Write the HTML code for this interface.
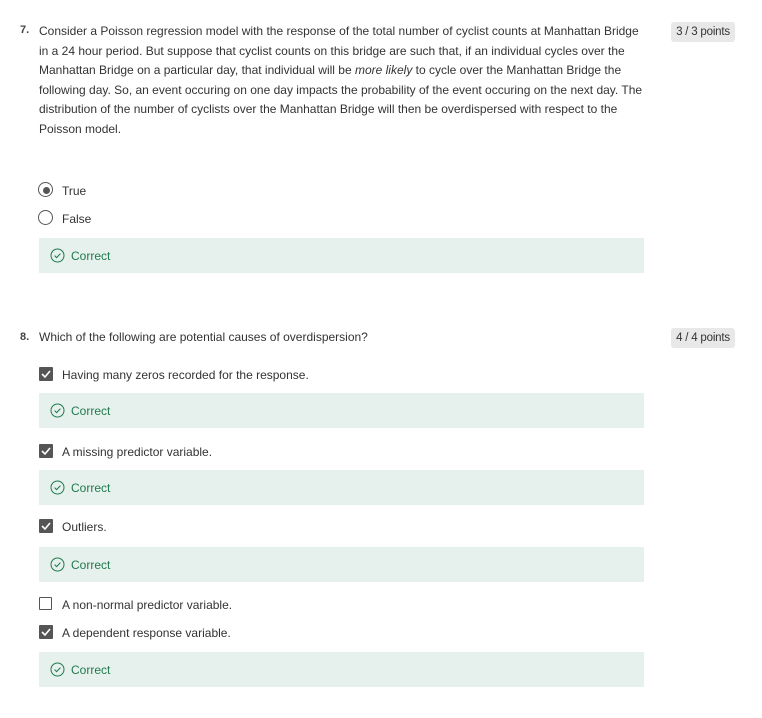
<!DOCTYPE html>
<html><head><style>
body{margin:0;background:#fff;font-family:"Liberation Sans",sans-serif;color:#333;font-size:12px;}
.a{position:absolute;white-space:nowrap;}
.num{font-weight:bold;font-size:11px;color:#444}
.p{line-height:19.5px;letter-spacing:0}
.badge{position:absolute;left:671px;width:64px;height:20px;background:#e8e8e8;border-radius:3px;font-size:11.5px;line-height:20px;text-align:center;color:#333;letter-spacing:-0.2px}
.ok{position:absolute;left:39px;width:605px;height:35px;background:#e6f1ed;}
.ok svg{position:absolute;left:11px;top:10px}
.ok span{position:absolute;left:32px;top:11px;color:#1f7a4d;font-size:12px;letter-spacing:0}
.cb{position:absolute;left:39px;width:14px;height:14px;background:#555;border-radius:1px}
.cbe{position:absolute;left:39px;width:11px;height:11px;border:1.5px solid #555;border-radius:1px}
.lbl{position:absolute;left:62px;font-size:12px;letter-spacing:0;white-space:nowrap}
</style></head><body>
<div class="a num" style="left:20px;top:24px">7.</div>
<div class="a p" style="left:39px;top:22px">Consider a Poisson regression model with the response of the total number of cyclist counts at Manhattan Bridge<br>in a 24 hour period. But suppose that cyclist counts on this bridge are such that, if an individual cycles over the<br>Manhattan Bridge on a particular day, that individual will be <i>more likely</i> to cycle over the Manhattan Bridge the<br>following day. So, an event occuring on one day impacts the probability of the event occuring on the next day. The<br>distribution of the number of cyclists over the Manhattan Bridge will then be overdispersed with respect to the<br>Poisson model.</div>
<div class="badge" style="top:22px">3 / 3 points</div>
<div style="position:absolute;left:38px;top:182px;width:13px;height:13px;border:1.5px solid #555;border-radius:50%"></div>
<div style="position:absolute;left:42.5px;top:186.5px;width:7px;height:7px;background:#555;border-radius:50%"></div>
<div class="lbl" style="top:184px">True</div>
<div style="position:absolute;left:38px;top:210px;width:13px;height:13px;border:1.5px solid #555;border-radius:50%"></div>
<div class="lbl" style="top:212px">False</div>
<div class="ok" style="top:238px"><svg width="15" height="15" viewBox="0 0 15 15"><circle cx="7.5" cy="7.5" r="6.5" fill="none" stroke="#1f7a4d" stroke-width="1"/><path d="M4.6 7.6l2 2 3.8-4" fill="none" stroke="#1f7a4d" stroke-width="1"/></svg><span>Correct</span></div>

<div class="a num" style="left:20px;top:331px">8.</div>
<div class="a p" style="left:39px;top:328px">Which of the following are potential causes of overdispersion?</div>
<div class="badge" style="top:328px">4 / 4 points</div>

<div class="cb" style="top:367px"><svg width="14" height="14"><path d="M3 7l3 3 5-6" fill="none" stroke="#fff" stroke-width="1.6"/></svg></div>
<div class="lbl" style="top:368px">Having many zeros recorded for the response.</div>
<div class="ok" style="top:393px"><svg width="15" height="15" viewBox="0 0 15 15"><circle cx="7.5" cy="7.5" r="6.5" fill="none" stroke="#1f7a4d" stroke-width="1"/><path d="M4.6 7.6l2 2 3.8-4" fill="none" stroke="#1f7a4d" stroke-width="1"/></svg><span>Correct</span></div>

<div class="cb" style="top:444px"><svg width="14" height="14"><path d="M3 7l3 3 5-6" fill="none" stroke="#fff" stroke-width="1.6"/></svg></div>
<div class="lbl" style="top:445px">A missing predictor variable.</div>
<div class="ok" style="top:470px"><svg width="15" height="15" viewBox="0 0 15 15"><circle cx="7.5" cy="7.5" r="6.5" fill="none" stroke="#1f7a4d" stroke-width="1"/><path d="M4.6 7.6l2 2 3.8-4" fill="none" stroke="#1f7a4d" stroke-width="1"/></svg><span>Correct</span></div>

<div class="cb" style="top:519px"><svg width="14" height="14"><path d="M3 7l3 3 5-6" fill="none" stroke="#fff" stroke-width="1.6"/></svg></div>
<div class="lbl" style="top:520px">Outliers.</div>
<div class="ok" style="top:547px"><svg width="15" height="15" viewBox="0 0 15 15"><circle cx="7.5" cy="7.5" r="6.5" fill="none" stroke="#1f7a4d" stroke-width="1"/><path d="M4.6 7.6l2 2 3.8-4" fill="none" stroke="#1f7a4d" stroke-width="1"/></svg><span>Correct</span></div>

<div class="cbe" style="top:597px"></div>
<div class="lbl" style="top:598px">A non-normal predictor variable.</div>
<div class="cb" style="top:625px"><svg width="14" height="14"><path d="M3 7l3 3 5-6" fill="none" stroke="#fff" stroke-width="1.6"/></svg></div>
<div class="lbl" style="top:626px">A dependent response variable.</div>
<div class="ok" style="top:652px"><svg width="15" height="15" viewBox="0 0 15 15"><circle cx="7.5" cy="7.5" r="6.5" fill="none" stroke="#1f7a4d" stroke-width="1"/><path d="M4.6 7.6l2 2 3.8-4" fill="none" stroke="#1f7a4d" stroke-width="1"/></svg><span>Correct</span></div>
</body></html>
